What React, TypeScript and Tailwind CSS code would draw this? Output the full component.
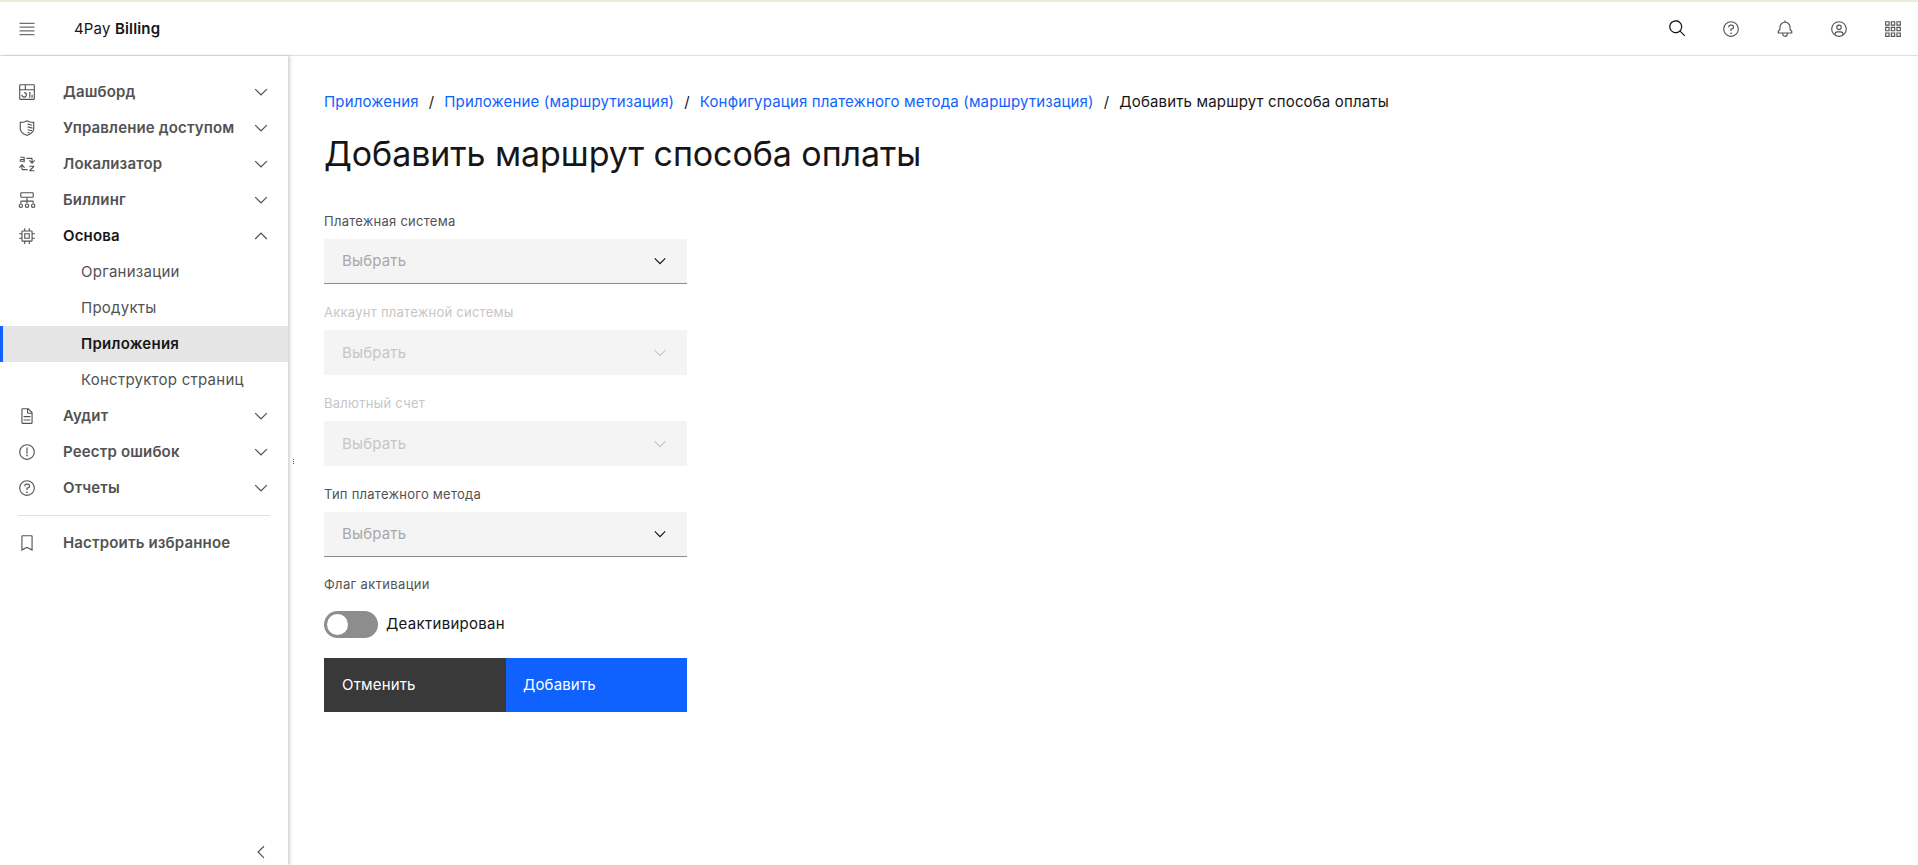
import type { ReactNode } from "react";

const Chevron = ({ dir = "down", className = "" }: { dir?: "down" | "up" | "left"; className?: string }) => {
  const d = {
    down: "M16 22L6 12l1.4-1.4L16 19.2l8.6-8.6L26 12z",
    up: "M16 10l10 10-1.4 1.4-8.6-8.6-8.6 8.6L6 20z",
    left: "M10 16L20 6l1.4 1.4L12.8 16l8.6 8.6L20 26z",
  }[dir];
  return (
    <svg viewBox="0 0 32 32" fill="currentColor" className={className}>
      <path d={d} />
    </svg>
  );
};

const Icon = ({ children, className = "w-[18px] h-[18px]" }: { children: ReactNode; className?: string }) => (
  <svg viewBox="0 0 32 32" fill="currentColor" className={className}>
    {children}
  </svg>
);

const circle = "M16 2a14 14 0 1 0 14 14A14 14 0 0 0 16 2Zm0 26a12 12 0 1 1 12-12A12 12 0 0 1 16 28Z";

const icons = {
  dashboard: (
    <Icon>
      <path d="M24 21h2v5h-2zM20 16h2v10h-2zM11 26a5.006 5.006 0 0 1-5-5h2a3 3 0 1 0 3-3v-2a5 5 0 0 1 0 10z" />
      <path d="M28 2H4a2 2 0 0 0-2 2v24a2 2 0 0 0 2 2h24a2.003 2.003 0 0 0 2-2V4a2.002 2.002 0 0 0-2-2Zm0 9H14V4h14ZM12 4v7H4V4ZM4 28V13h24l.002 15Z" />
    </Icon>
  ),
  shield: (
    <Icon>
      <path d="M16 2c-3 1.500-7 3-11.500 3H3v12c0 6.500 5.500 11 13 13 7.500-2 13-6.500 13-13V5h-1.500C23 5 19 3.500 16 2Zm0 2.300c3 1.400 6.500 2.500 11 2.700v10c0 5.200-4.500 9-11 10.900C9.500 26 5 22.200 5 17V7c4.500-.2 8-1.300 11-2.700Z" fillRule="evenodd" />
      <path d="M17 8l8 2v2l-8-2zM17 13l9 2.200v2l-9-2.200zM17 18l8.500 2-1 1.900-7.500-1.900zM17 23l5 1.200-2 1.500-3-.7z" />
    </Icon>
  ),
  translate: (
    <Icon>
      <path d="M4 3h6a2 2 0 0 1 2 2v8h-2v-1H5a2 2 0 0 1-2-2V9a2 2 0 0 1 2-2h5V5H4Zm1 6v1h5V9Z" />
      <path d="M15 5h9a2 2 0 0 1 2 2v5l3-3 1.400 1.400L25 15.800l-5.400-5.400L21 9l3 3V7h-9z" />
      <path d="M7 16.200l5.400 5.400L11 23l-3-3v5h9v2H8a2 2 0 0 1-2-2v-5l-3 3-1.400-1.400z" />
      <path d="M20 19h9v2l-6 6h6v2h-9v-2l6-6h-6z" />
    </Icon>
  ),
  billing: (
    <Icon>
      <path d="M6 2h20a2 2 0 0 1 2 2v6a2 2 0 0 1-2 2H6a2 2 0 0 1-2-2V4a2 2 0 0 1 2-2Zm0 2v6h20V4Z" />
      <path d="M15 12h2v5h9a2 2 0 0 1 2 2v3h-2v-3H17v3h-2v-3H6v3H4v-3a2 2 0 0 1 2-2h9z" />
      <path d="M5 22a4 4 0 1 1 0 8 4 4 0 0 1 0-8Zm0 2a2 2 0 1 0 0 4 2 2 0 0 0 0-4ZM16 22a4 4 0 1 1 0 8 4 4 0 0 1 0-8Zm0 2a2 2 0 1 0 0 4 2 2 0 0 0 0-4ZM27 22a4 4 0 1 1 0 8 4 4 0 0 1 0-8Zm0 2a2 2 0 1 0 0 4 2 2 0 0 0 0-4Z" />
    </Icon>
  ),
  chip: (
    <Icon>
      <path d="M11 11v10h10V11H11zm8 8h-6v-6h6v6z" />
      <path d="M30 13v-2h-4V8a2 2 0 0 0-2-2h-3V2h-2v4h-6V2h-2v4H8a2 2 0 0 0-2 2v3H2v2h4v6H2v2h4v3a2 2 0 0 0 2 2h3v4h2v-4h6v4h2v-4h3a2 2 0 0 0 2-2v-3h4v-2h-4v-6zm-6 11H8V8h16z" />
    </Icon>
  ),
  document: (
    <Icon>
      <path d="M25.700 9.300l-7-7A.9.9 0 0 0 18 2H8a2 2 0 0 0-2 2v24a2 2 0 0 0 2 2h16a2 2 0 0 0 2-2V10a.9.9 0 0 0-.3-.7zM18 4.400l5.600 5.600H18zM24 28H8V4h8v6a2 2 0 0 0 2 2h6z" />
      <path d="M10 22h12v2H10zM10 16h12v2H10z" />
    </Icon>
  ),
  warning: (
    <Icon>
      <path d={circle} />
      <path d="M15 8h2v11h-2z" />
      <circle cx="16" cy="22" r="1.500" />
    </Icon>
  ),
  help: (
    <Icon>
      <path d={circle} />
      <circle cx="16" cy="23.500" r="1.500" />
      <path d="M17 8h-1.500a4.490 4.490 0 0 0-4.500 4.500v.5h2v-.5a2.500 2.500 0 0 1 2.500-2.500H17a2.500 2.500 0 0 1 0 5h-2v4.500h2V17a4.500 4.500 0 0 0 0-9Z" />
    </Icon>
  ),
  bookmark: (
    <Icon>
      <path d="M24 4v22.750l-7.100-3.590-.9-.45-.9.45L8 26.750V4h16m0-2H8a2 2 0 0 0-2 2v26l10-5 10 5V4a2 2 0 0 0-2-2z" />
    </Icon>
  ),
};

const NavRow = ({ icon, label, open }: { icon: ReactNode; label: string; open?: boolean }) => (
  <div className={`flex h-9 items-center pl-[18px] pr-[17px] font-semibold ${open ? "text-[#161616]" : "text-[#525252]"}`}>
    <span className="w-[45px] text-[#525252]">{icon}</span>
    <span className="flex-1 pt-px">{label}</span>
    <Chevron dir={open ? "up" : "down"} className="h-5 w-5 text-[#525252]" />
  </div>
);

const SubRow = ({ label, active }: { label: string; active?: boolean }) => (
  <div
    className={
      active
        ? "flex h-9 items-center border-l-[3px] border-[#0f62fe] bg-[#e5e5e5] pl-[78px] pt-px font-semibold tracking-[0.25px] text-[#161616]"
        : "flex h-9 items-center pl-[81px] pt-px tracking-[0.25px] text-[#525252]"
    }
  >
    {label}
  </div>
);

const Field = ({ label, disabled }: { label: string; disabled?: boolean }) => (
  <div className="mb-5">
    <div className={`mb-[10px] h-4 text-[13px] leading-4 tracking-[0.25px] ${disabled ? "text-[#c6c6c6]" : "text-[#525252]"}`}>
      {label}
    </div>
    <div
      className={`flex h-[45px] items-center justify-between bg-[#f4f4f4] pl-[18px] pr-[18px] ${
        disabled ? "text-[#c6c6c6]" : "border-b border-[#8d8d8d] text-[#a8a8a8]"
      }`}
    >
      <span className="pt-px">Выбрать</span>
      <Chevron className={`h-[18px] w-[18px] ${disabled ? "text-[#c6c6c6]" : "text-[#161616]"}`} />
    </div>
  </div>
);

export default function App() {
  return (
    <div className="flex h-screen flex-col overflow-hidden bg-white text-[15px] tracking-[0.16px] text-[#161616] [font-family:Inter,sans-serif]">
      <header className="flex h-14 shrink-0 items-center border-t-2 border-b border-t-[#ebebdc] border-b-[#e0e0e0] pr-4">
        <Icon className="ml-[17px] h-5 w-5 text-[#6f6f6f]">
          <path d="M4 6h24v2H4zM4 24h24v2H4zM4 12h24v2H4zM4 18h24v2H4z" />
        </Icon>
        <div className="ml-[37px] flex-1 pt-px">
          4Pay <span className="font-semibold">Billing</span>
        </div>
        <div className="flex items-center gap-9">
          <Icon className="-mx-[0.5px] h-[19px] w-[19px] text-[#161616]">
            <path d="M29 27.586l-7.552-7.552a11.018 11.018 0 1 0-1.414 1.414L27.586 29ZM4 13a9 9 0 1 1 9 9A9.010 9.010 0 0 1 4 13Z" />
          </Icon>
          <span className="text-[#525252]">{icons.help}</span>
          <Icon className="h-[18px] w-[18px] text-[#525252]">
            <path d="M28.707 19.293 26 16.586V13a10.014 10.014 0 0 0-9-9.950V1h-2v2.050A10.014 10.014 0 0 0 6 13v3.586l-2.707 2.707A1 1 0 0 0 3 20v3a1 1 0 0 0 1 1h7v.777a5.152 5.152 0 0 0 4.500 5.199A5.006 5.006 0 0 0 21 25v-1h7a1 1 0 0 0 1-1v-3a1 1 0 0 0-.293-.707ZM19 25a3 3 0 0 1-6 0v-1h6Zm8-3H5v-1.586l2.707-2.707A1 1 0 0 0 8 17v-4a8 8 0 0 1 16 0v4a1 1 0 0 0 .293.707L27 20.414Z" />
          </Icon>
          <Icon className="h-[18px] w-[18px] text-[#525252]">
            <path d="M16 8a5 5 0 1 0 5 5 5 5 0 0 0-5-5Zm0 8a3 3 0 1 1 3-3 3.003 3.003 0 0 1-3 3Z" />
            <path d="M16 2a14 14 0 1 0 14 14A14.016 14.016 0 0 0 16 2Zm-6 24.377V25a3.003 3.003 0 0 1 3-3h6a3.003 3.003 0 0 1 3 3v1.377a11.899 11.899 0 0 1-12 0Zm13.993-1.451A5.002 5.002 0 0 0 19 20h-6a5.002 5.002 0 0 0-4.992 4.926 12 12 0 1 1 15.985 0Z" />
          </Icon>
          <Icon className="h-[18px] w-[18px] text-[#525252]">
            <path d="M2 2h8v8H2zm2 2v4h4V4zM12 2h8v8h-8zm2 2v4h4V4zM22 2h8v8h-8zm2 2v4h4V4zM2 12h8v8H2zm2 2v4h4v-4zM12 12h8v8h-8zm2 2v4h4v-4zM22 12h8v8h-8zm2 2v4h4v-4zM2 22h8v8H2zm2 2v4h4v-4zM12 22h8v8h-8zm2 2v4h4v-4zM22 22h8v8h-8zm2 2v4h4v-4z" fillRule="evenodd" />
          </Icon>
        </div>
      </header>

      <div className="flex min-h-0 flex-1">
        <aside className="flex w-[288px] shrink-0 flex-col pt-[18px] shadow-[2px_0_3px_rgba(0,0,0,0.18)]">
          <NavRow icon={icons.dashboard} label="Дашборд" />
          <NavRow icon={icons.shield} label="Управление доступом" />
          <NavRow icon={icons.translate} label="Локализатор" />
          <NavRow icon={icons.billing} label="Биллинг" />
          <NavRow icon={icons.chip} label="Основа" open />
          <SubRow label="Организации" />
          <SubRow label="Продукты" />
          <SubRow label="Приложения" active />
          <SubRow label="Конструктор страниц" />
          <NavRow icon={icons.document} label="Аудит" />
          <NavRow icon={icons.warning} label="Реестр ошибок" />
          <NavRow icon={icons.help} label="Отчеты" />
          <div className="mx-[18px] mt-[9px] mb-[9px] border-t border-[#e0e0e0]" />
          <div className="flex h-9 items-center pl-[18px] font-semibold text-[#525252]">
            <span className="w-[45px]">{icons.bookmark}</span>
            <span className="pt-px">Настроить избранное</span>
          </div>
          <div className="mt-auto flex justify-end pr-[17px] pb-[3px]">
            <Chevron dir="left" className="h-5 w-5 text-[#525252]" />
          </div>
        </aside>

        <div className="flex w-0 items-center">
          <div className="ml-[5px] mb-[-1px] flex shrink-0 flex-col gap-px">
            <span className="h-px w-px bg-[#525252]" />
            <span className="h-px w-px bg-[#525252]" />
            <span className="h-px w-px bg-[#525252]" />
          </div>
        </div>

        <main className="flex-1 pl-9 pt-9">
          <nav className="flex h-5 items-center gap-[10px] pt-px text-[#0f62fe]">
            <span>Приложения</span>
            <span className="text-[#161616]">/</span>
            <span>Приложение (маршрутизация)</span>
            <span className="text-[#161616]">/</span>
            <span>Конфигурация платежного метода (маршрутизация)</span>
            <span className="text-[#161616]">/</span>
            <span className="text-[#161616]">Добавить маршрут способа оплаты</span>
          </nav>
          <h1 className="mt-[20px] h-[44px] text-[34px] font-normal leading-[44px] tracking-[-0.08px]">Добавить маршрут способа оплаты</h1>

          <form className="mt-[37px] w-[363px]">
            <Field label="Платежная система" />
            <Field label="Аккаунт платежной системы" disabled />
            <Field label="Валютный счет" disabled />
            <Field label="Тип платежного метода" />
            <div className="mb-[19px] -mt-px h-4 text-[13px] leading-4 tracking-[0.35px] text-[#525252]">Флаг активации</div>
            <div className="flex items-center gap-2">
              <div className="flex h-[27px] w-[54px] items-center rounded-full bg-[#8d8d8d] pl-[3px]">
                <div className="h-[21px] w-[21px] rounded-full bg-white" />
              </div>
              <span className="tracking-[0.3px]">Деактивирован</span>
            </div>
            <div className="mt-[20px] flex h-[54px] text-white">
              <div className="flex w-[182px] items-center bg-[#393939] pl-[18px]">Отменить</div>
              <div className="flex flex-1 items-center bg-[#0f62fe] pl-[17px]">Добавить</div>
            </div>
          </form>
        </main>
      </div>
    </div>
  );
}
